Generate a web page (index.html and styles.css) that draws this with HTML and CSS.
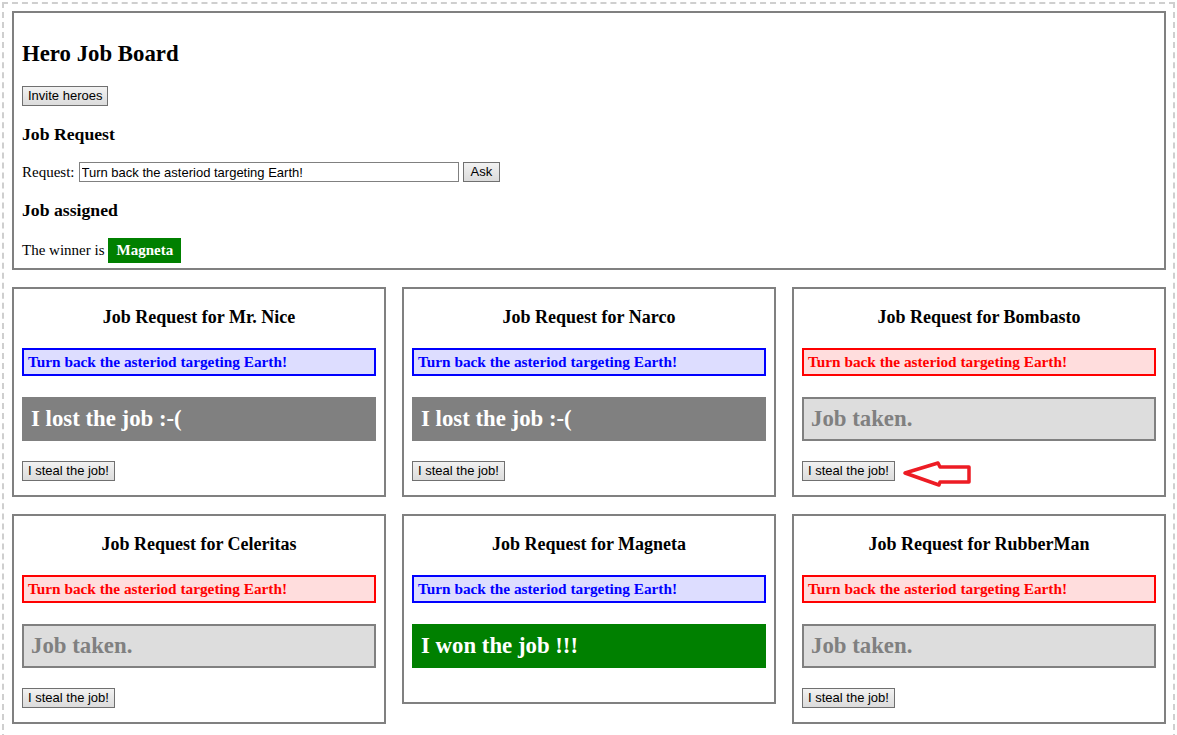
FILE: index.html
```html
<!DOCTYPE html>
<html>
<head>
<meta charset="utf-8">
<title>Hero Job Board</title>
<link rel="stylesheet" href="styles.css">
</head>
<body>
<div class="board">
  <div class="header">
    <h2 class="title">Hero Job Board</h2>
    <div class="row"><button class="btn">Invite heroes</button></div>
    <h3 class="sub">Job Request</h3>
    <div class="row"><span>Request:</span><input class="req-input" type="text" value="Turn back the asteriod targeting Earth!"><button class="btn ask">Ask</button></div>
    <h3 class="sub">Job assigned</h3>
    <div class="winner-row"><span>The winner is</span><span class="badge">Magneta</span></div>
  </div>
  <div class="grid">
    <div class="card">
      <h3 class="card-title">Job Request for Mr. Nice</h3>
      <div class="req blue">Turn back the asteriod targeting Earth!</div>
      <div class="status lost">I lost the job :-(</div>
      <div class="steal"><button class="btn">I steal the job!</button></div>
    </div>
    <div class="card">
      <h3 class="card-title">Job Request for Narco</h3>
      <div class="req blue">Turn back the asteriod targeting Earth!</div>
      <div class="status lost">I lost the job :-(</div>
      <div class="steal"><button class="btn">I steal the job!</button></div>
    </div>
    <div class="card">
      <h3 class="card-title">Job Request for Bombasto</h3>
      <div class="req red">Turn back the asteriod targeting Earth!</div>
      <div class="status taken">Job taken.</div>
      <div class="steal"><button class="btn">I steal the job!</button>
        <svg class="arrow" width="72" height="28" viewBox="0 0 72 28"><polygon points="4,14 37,4 39,8 68,8 68,23 39,23 38,26" fill="none" stroke="#ed1c24" stroke-width="3.5" stroke-linejoin="round"/></svg>
      </div>
    </div>
    <div class="card">
      <h3 class="card-title">Job Request for Celeritas</h3>
      <div class="req red">Turn back the asteriod targeting Earth!</div>
      <div class="status taken">Job taken.</div>
      <div class="steal"><button class="btn">I steal the job!</button></div>
    </div>
    <div class="card">
      <h3 class="card-title">Job Request for Magneta</h3>
      <div class="req blue">Turn back the asteriod targeting Earth!</div>
      <div class="status won">I won the job !!!</div>
    </div>
    <div class="card">
      <h3 class="card-title">Job Request for RubberMan</h3>
      <div class="req red">Turn back the asteriod targeting Earth!</div>
      <div class="status taken">Job taken.</div>
      <div class="steal"><button class="btn">I steal the job!</button></div>
    </div>
  </div>
</div>
</body>
</html>
```
FILE: styles.css
```css
html, body {
  margin: 0;
  padding: 0;
  background: #fff;
}
body {
  font-family: "Liberation Serif", "Times New Roman", serif;
  font-size: 15px;
  color: #000;
}
.board {
  margin: 2px 2px 0 2px;
  border: 2px dashed #cfcfcf;
  padding: 7px 7px 14px 8px;
}
.header {
  border: 2px solid #808080;
  padding: 0 8px 5px 8px;
}
.title {
  font-size: 22.8px;
  line-height: 26px;
  font-weight: bold;
  margin: 28px 0 19px 0;
}
.row {
  height: 20px;
  line-height: 20px;
  display: flex;
  align-items: center;
  gap: 4px;
}
.sub {
  font-size: 17.7px;
  line-height: 20px;
  font-weight: bold;
  margin: 18px 0 18px 0;
}
.btn {
  font-family: "Liberation Sans", Arial, sans-serif;
  font-size: 13px;
  height: 20px;
  padding: 0 5px;
  margin: 0;
  border: 1px solid #707070;
  border-radius: 0;
  background: linear-gradient(#f2f2f2, #e6e6e6 50%, #dcdcdc);
  color: #000;
  line-height: 18px;
}
.btn.ask {
  padding: 0 7px;
}
.req-input {
  font-family: "Liberation Sans", Arial, sans-serif;
  font-size: 13px;
  width: 380px;
  height: 20px;
  box-sizing: border-box;
  border: 1px solid #808080;
  padding: 0 2px;
  margin: 0;
  color: #000;
}
.winner-row {
  height: 25px;
  display: flex;
  align-items: center;
  gap: 4px;
}
.badge {
  background: #008000;
  color: #fff;
  font-weight: bold;
  padding: 4px 8px;
  line-height: 17px;
}
.grid {
  display: grid;
  grid-template-columns: repeat(3, 1fr);
  column-gap: 16px;
  row-gap: 17px;
  margin-top: 17px;
  align-items: start;
}
.card {
  border: 2px solid #808080;
  padding: 0 8px 14px 8px;
}
.card-title {
  text-align: center;
  font-size: 18px;
  line-height: 20px;
  font-weight: bold;
  margin: 18px 0 21px 0;
}
.req {
  border: 2px solid;
  padding: 3px 4px;
  line-height: 18px;
  font-weight: bold;
  font-size: 15.3px;
  margin-bottom: 21px;
}
.req.blue {
  border-color: #0000ff;
  background: #ddddff;
  color: #0000ff;
}
.req.red {
  border-color: #ff0000;
  background: #ffdddd;
  color: #ff0000;
}
.status {
  border: 2px solid;
  padding: 7px 7px;
  font-size: 22.8px;
  line-height: 26px;
  font-weight: bold;
  margin-bottom: 20px;
}
.status.lost {
  background: #808080;
  border-color: #808080;
  color: #fff;
}
.status.taken {
  background: #dddddd;
  border-color: #808080;
  color: #808080;
}
.status.won {
  background: #008000;
  border-color: #008000;
  color: #fff;
}
.steal {
  height: 20px;
  display: flex;
  align-items: center;
  gap: 6px;
}
.arrow {
  flex: none;
  margin-top: 4px;
}
```
